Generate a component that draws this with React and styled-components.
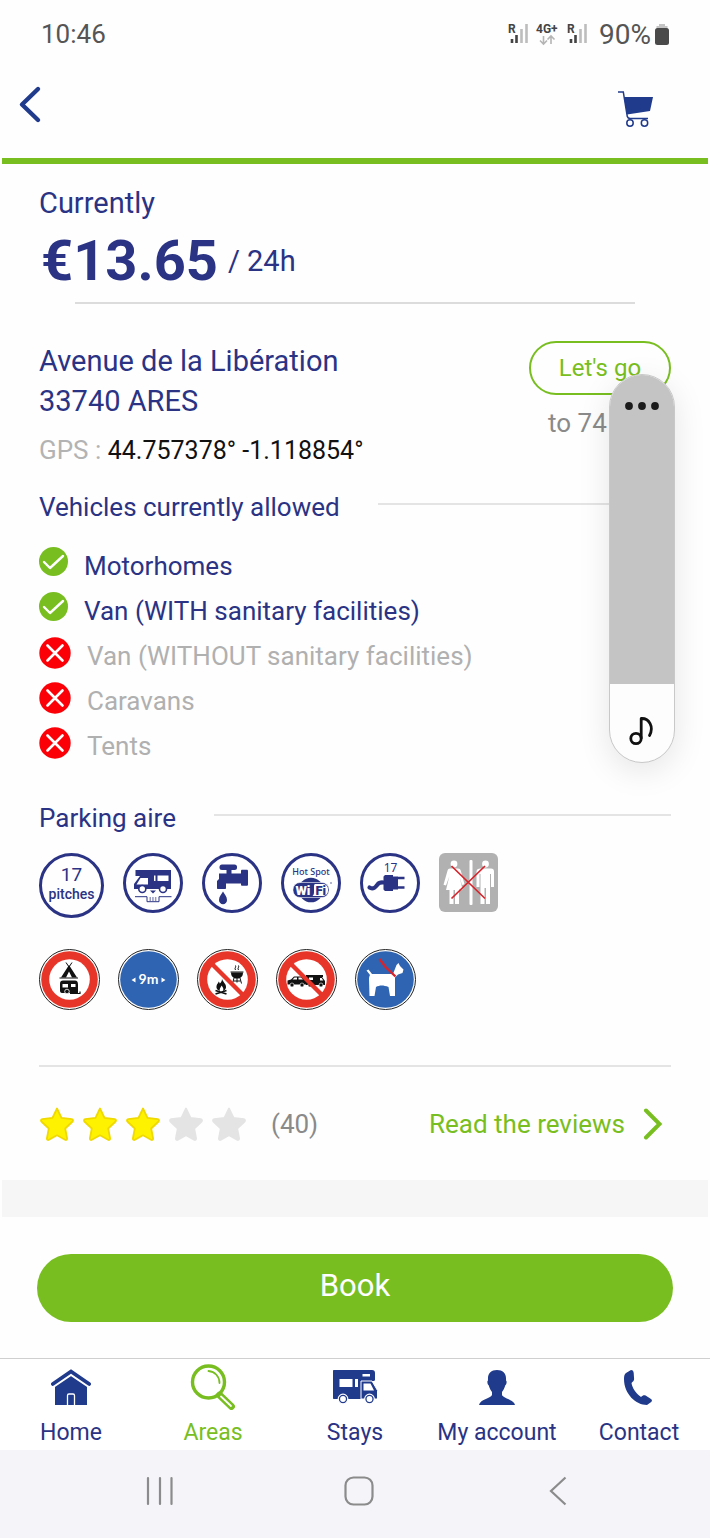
import { useState } from "react";
import styled, { createGlobalStyle } from "styled-components";

const navy = "#2a3384";
const blue = "#203a8c";
const green = "#78be20";

const vehicles = [
  { label: "Motorhomes", allowed: true },
  { label: "Van (WITH sanitary facilities)", allowed: true },
  { label: "Van (WITHOUT sanitary facilities)", allowed: false },
  { label: "Caravans", allowed: false },
  { label: "Tents", allowed: false },
];

const CheckIcon = () => (
  <svg width="29" height="29" viewBox="0 0 29 29">
    <circle cx="14.5" cy="14.5" r="14.5" fill={green} />
    <path d="M5 15l6 6L24 9" fill="none" stroke="#fff" strokeWidth="2.4" strokeLinecap="round" strokeLinejoin="round" />
  </svg>
);

const CrossIcon = () => (
  <svg width="32" height="32" viewBox="0 0 32 32">
    <circle cx="16" cy="16" r="15.7" fill="#fb0007" />
    <path d="M8.5 8.5l15 15M23.5 8.5l-15 15" stroke="#fff" strokeWidth="2.6" strokeLinecap="round" />
  </svg>
);

const SignalIcon = () => (
  <svg width="21" height="26" viewBox="0 0 21 26">
    <text x="0" y="12" fontFamily="Roboto, sans-serif" fontSize="12" fontWeight="700" fill="#444">R</text>
    <path d="M4 18v4M8.5 14v8" stroke="#444" strokeWidth="2.6" />
    <path d="M13.5 8v14M18.500 3v19" stroke="#bdbdbd" strokeWidth="2.6" />
  </svg>
);

const NetworkIcon = () => (
  <svg width="24" height="26" viewBox="0 0 24 26">
    <text x="0" y="12" fontFamily="Roboto, sans-serif" fontSize="12" fontWeight="700" fill="#444">4G+</text>
    <path d="M7.5 15v8M4 19.500l3.500 3.500 3.500-3.500M15 23v-8M11.500 18.500L15 15l3.500 3.500" fill="none" stroke="#b5b5b5" strokeWidth="1.6" />
  </svg>
);

const BatteryIcon = () => (
  <svg width="14" height="21" viewBox="0 0 14 21">
    <path d="M4 0h6v2h2.500v3h-11V2H4z" fill="#c4c4c4" />
    <rect x="0" y="4" width="14" height="17" rx="2.5" fill="#4a4a4a" />
  </svg>
);

const BackIcon = () => (
  <svg width="24" height="44" viewBox="0 0 24 44">
    <path d="M20 5L4 20.500 20 36" fill="none" stroke={blue} strokeWidth="4.4" strokeLinecap="round" strokeLinejoin="round" />
  </svg>
);

const CartIcon = () => (
  <svg width="36" height="44" viewBox="0 0 36 44">
    <path d="M6 13h29l-3 14-23 3.500z" fill={blue} />
    <path d="M0 8h5.300l4 24.500c.4 1.500 1.500 2 3 2H30" fill="none" stroke={blue} strokeWidth="1.5" />
    <circle cx="12" cy="39" r="3.2" fill="#fff" stroke={blue} strokeWidth="1.5" />
    <circle cx="26.5" cy="39" r="3.2" fill="#fff" stroke={blue} strokeWidth="1.5" />
  </svg>
);

const StarIcon = ({ filled }) => (
  <svg width="36" height="36" viewBox="0 0 36 36">
    <path
      d="M18 2.500l4.500 9.300 10.300 1.400c1.200.2 1.600 1.500.8 2.300l-7.400 7 1.900 9.900c.2 1.200-.9 2-2 1.400L18 29.300l-8.100 4.500c-1.100.6-2.200-.2-2-1.400l1.900-9.900-7.400-7c-.8-.8-.4-2.100.8-2.300l10.300-1.400z"
      fill={filled ? "#fff200" : "#e4e4e4"}
      stroke={filled ? "#efd900" : "#e4e4e4"}
      strokeWidth="1.8"
      strokeLinejoin="round"
    />
  </svg>
);

const ServiceIcon = () => (
  <svg width="60" height="60" viewBox="0 0 60 60">
    <circle cx="30" cy="30" r="28.5" fill="#fff" stroke={navy} strokeWidth="3" />
    <path d="M12.500 17H48v19H29V23H12.500z" fill={navy} />
    <path d="M17 23h12.500v13H11v-5z" fill={navy} />
    <path d="M17.500 25h7.500v6.500H13.500zM34.500 22.500h11V28h-11zM31 22.500h1.500V28H31z" fill="#fff" />
    <circle cx="19.3" cy="36" r="3.5" fill="#fff" stroke={navy} strokeWidth="1.6" />
    <circle cx="40" cy="36" r="3.5" fill="#fff" stroke={navy} strokeWidth="1.6" />
    <path d="M27 37.500h6l-3 3z" fill={navy} />
    <path d="M12 43.700h12v5h12v-5h12.500" fill="none" stroke={navy} strokeWidth="1" />
    <path d="M26.500 45h7M26.500 47h7" stroke={navy} strokeWidth="1" strokeDasharray="1.5 1.2" />
  </svg>
);

const WaterIcon = () => (
  <svg width="60" height="60" viewBox="0 0 60 60">
    <circle cx="30" cy="30" r="28.5" fill="#fff" stroke={navy} strokeWidth="3" />
    <rect x="17.5" y="11.5" width="17.5" height="5.5" rx="2.5" fill={navy} />
    <path d="M24.500 16h5v4.500H39V18c0-.8.500-1.300 1.300-1.300h4.400c.8 0 1.300.5 1.300 1.300v13.500c0 .8-.5 1.300-1.300 1.300h-4.400c-.8 0-1.300-.5-1.300-1.300v-1H24v4.500c0 .6-.4 1-1 1h-7c-.6 0-1-.4-1-1v-7l2-2v-5.500h7.500z" fill={navy} />
    <path d="M21 38.500c1.500 3 4 5 4 8.500a4 4.300 0 01-8 0c0-3.500 2.500-5.500 4-8.500z" fill={navy} />
  </svg>
);

const WifiIcon = () => (
  <svg width="60" height="60" viewBox="0 0 60 60">
    <circle cx="30" cy="30" r="28.5" fill="#fff" stroke={navy} strokeWidth="3" />
    <text x="30" y="22" textAnchor="middle" fontFamily="Noto Sans, sans-serif" fontSize="9" fontWeight="500" fill={navy}>Hot Spot</text>
    <circle cx="30" cy="37" r="12.3" fill={navy} />
    <rect x="12" y="29.5" width="36" height="15" rx="7" fill={navy} stroke="#fff" strokeWidth=".6" />
    <path d="M34 31h8a5 5 0 015 5v2a5 5 0 01-5 5H31.500c1-1 1.500-2 1.500-4v-5.500c0-1 .3-2.500 1-2.500z" fill="#fff" />
    <text x="14.5" y="41.500" fontFamily="Roboto, sans-serif" fontSize="13" fontWeight="900" fill="#fff">Wi</text>
    <text x="34.5" y="41.500" fontFamily="Roboto, sans-serif" fontSize="13" fontWeight="900" fill={navy}>Fi</text>
    <circle cx="50" cy="30" r=".7" fill={navy} />
  </svg>
);

const PowerIcon = () => (
  <svg width="60" height="60" viewBox="0 0 60 60">
    <circle cx="30" cy="30" r="28.5" fill="#fff" stroke={navy} strokeWidth="3" />
    <text x="30.5" y="18.500" textAnchor="middle" fontFamily="Noto Sans, sans-serif" fontSize="12" fill={navy}>17</text>
    <path d="M9.500 34.500c4 2.500 6-.5 8-3s3.500-2 6.500-2" fill="none" stroke={navy} strokeWidth="4.2" strokeLinecap="round" />
    <path d="M23.500 23.500l1.500-1.500h8v1.500h5v13h-5V38h-8l-1.500-1.500z" fill={navy} />
    <path d="M38 25h6.500M38 34.500h6.500" stroke={navy} strokeWidth="2.5" />
  </svg>
);

const ToiletIcon = () => (
  <svg width="59" height="59" viewBox="0 0 59 59">
    <rect width="59" height="59" rx="6" fill="#b1b1b1" />
    <g fill="#fff">
      <circle cx="15" cy="11" r="3.4" />
      <path d="M11 15.500h8c1.500 0 2.300.8 2.800 2.200l3.700 13.600-2.500.8-2.500-8.500 3 13H20V51h-4V37h-1.500v14h-4V37H7l3.300-13.500L7 32.500l-2.500-.8 4-14c.4-1.400 1.200-2.200 2.500-2.200z" />
      <rect x="30.5" y="7" width="3" height="45" rx="1" />
      <circle cx="46.5" cy="11" r="3.4" />
      <path d="M41.500 15.500h10.500c2 0 3 1.200 3 3V34h-3V21h-1v30h-4V35h-1.500v16h-4V21h-1v13h-3V18.500c0-1.800 1.500-3 4-3z" />
    </g>
    <path d="M12.500 13l33.500 32.500M46 13L12.500 45.500" stroke="#d8232a" strokeWidth="1.7" />
  </svg>
);

const RoadSign = ({ color, children }) => (
  <svg width="61" height="61" viewBox="0 0 61 61">
    <circle cx="30.5" cy="30.5" r="30" fill="#fff" stroke="#222" strokeWidth="1" />
    <circle cx="30.5" cy="30.5" r="28.3" fill={color} />
    {children}
  </svg>
);

const NoCampingSign = () => (
  <RoadSign color="#e73529">
    <circle cx="30.5" cy="30.5" r="20.3" fill="#fff" />
    <path d="M27 13.500l3 4.500 3-4.500M20.500 29h18.500" fill="none" stroke="#111" strokeWidth="1" />
    <path d="M30 16l8 12.500h-5L30 22.500l-3 6h-5z" fill="#111" />
    <path d="M24 31.500h12c2 0 3 1.500 3 4V44H23c-1.500 0-2-1-2-2.500v-7c0-2 1-3 3-3z" fill="#111" />
    <path d="M23.500 35H29v3.500h-5.500zM32 35h4.500v3H32z" fill="#fff" />
    <circle cx="28" cy="42.5" r="2.3" fill="#111" stroke="#fff" strokeWidth=".8" />
    <path d="M31 44.500h10v-2" fill="none" stroke="#111" strokeWidth="1.2" />
  </RoadSign>
);

const LengthSign = () => (
  <RoadSign color="#2e64b1">
    <text x="30.5" y="35" textAnchor="middle" fontFamily="Lato, sans-serif" fontSize="14" fontWeight="700" fill="#fff">9m</text>
    <path d="M17.500 28.500v5L13.500 31zM43.500 28.500v5l4-2.500z" fill="#fff" />
  </RoadSign>
);

const NoFireSign = () => (
  <RoadSign color="#e73529">
    <circle cx="30.5" cy="30.5" r="20.3" fill="#fff" />
    <path d="M25 29.500c0 3 4.500 5 4 9-.3 2-1.500 3-3 3.500.8-2 .3-3.500-1.500-5.500-.5 2-2.500 3-1.500 5.500-2.500-.5-4-2.500-3.500-5s2-2.500 2-4.500c.7.500 1 1 1.200 2 1.300-1 2.500-2.500 2.300-5z" fill="#111" />
    <path d="M18.500 41.500l11 3.500M29.500 41.500l-11 3.500" stroke="#111" strokeWidth="1.8" />
    <path d="M34 23.500h12c0 4-2.500 6-6 6s-6-2-6-6z" fill="#111" />
    <path d="M33.500 23h13M37 29l-1.500 5.500M43 29l1.500 5.500M40 29v4.500M36.500 32h7M38.500 21c-1.500-2 1-2.500 0-4.500M41.500 21c-1.500-2 1-2.500 0-4.500" fill="none" stroke="#111" strokeWidth="1" />
    <path d="M14.500 14.500l32 32" stroke="#e73529" strokeWidth="4.5" />
  </RoadSign>
);

const NoOvernightSign = () => (
  <RoadSign color="#e73529">
    <circle cx="30.5" cy="30.5" r="20.3" fill="#fff" />
    <path d="M11.500 31.500l3.500-1 3-3h7.500l3.500 3.500h2v4.500H11.500z" fill="#111" />
    <path d="M16.500 30.500l2-2h2.500v2zM22.500 28.500h2.500l2 2h-4.500z" fill="#fff" />
    <path d="M30 26h17v2h-1l3 4v4H30z" fill="#111" />
    <path d="M33 28.500h4V31h-4zM44 29h1.700l1.600 2.500H44z" fill="#fff" />
    <g fill="#111" stroke="#fff" strokeWidth=".6">
      <circle cx="16" cy="36" r="2" />
      <circle cx="26" cy="36" r="2" />
      <circle cx="34" cy="36" r="2" />
      <circle cx="45" cy="36" r="2" />
    </g>
    <path d="M14.500 14.500l32 32" stroke="#e73529" strokeWidth="4.5" />
  </RoadSign>
);

const DogSign = () => (
  <RoadSign color="#2e64b1">
    <path d="M11.500 21.500l2-1 3.500 4.500h21l3.500-9 2-2 1.500 3 3.500 3.500-1 3.500-4.500 1.500-3 3v18.500h-5L33.500 38c-5-2-9-2-12.500 0l-1.500 9h-5l-.5-17c0-2 .5-3 1-4z" fill="#fff" />
    <path d="M24.500 10l6 8 10 9.500" fill="none" stroke="#d8232a" strokeWidth="2.4" />
  </RoadSign>
);

const HomeIcon = () => (
  <svg width="40" height="46" viewBox="0 0 40 46">
    <path d="M4 20.500L20 9l16 11.500V41H4z" fill={blue} />
    <path d="M1.500 21L20 8.500 38.500 21" fill="none" stroke="#fff" strokeWidth="6" />
    <path d="M1.800 20L20 7.500 38.200 20" fill="none" stroke={blue} strokeWidth="3.6" strokeLinecap="round" />
    <path d="M16.500 41V31.500a1.500 1.500 0 011.500-1.500h4a1.500 1.500 0 011.500 1.500V41" fill={blue} stroke="#fff" strokeWidth="1.3" />
  </svg>
);

const SearchIcon = () => (
  <svg width="46" height="46" viewBox="0 0 46 46">
    <circle cx="18.5" cy="18" r="16" fill="none" stroke={green} strokeWidth="3.4" />
    <path d="M18.500 7c6.500.5 11 5.500 11 12" fill="none" stroke={green} strokeWidth="1.8" strokeLinecap="round" />
    <path d="M29.500 31l12 11.500" stroke={green} strokeWidth="6.8" strokeLinecap="round" />
    <path d="M31 32.500l10 9.500" stroke="#fff" strokeWidth="1.8" strokeLinecap="round" />
  </svg>
);

const CamperIcon = () => (
  <svg width="45" height="46" viewBox="0 0 45 46">
    <path d="M1 6h38c2 0 3 1 3 3v6.500c0 .8-.5 1.500-1.500 1.500H30v18H1c-.6 0-1-.4-1-1V7c0-.6.4-1 1-1z" fill={blue} />
    <path d="M6.500 15h13v8h-13zM22 15h3v8h-3zM29.500 10h7.500v2.500h-7.500z" fill="#fff" />
    <path d="M28 17h11l5.500 9.500V35H28z" fill={blue} stroke="#fff" strokeWidth="1" />
    <path d="M30.500 19.500h7L41 26.500H30.500z" fill="#fff" />
    <circle cx="10" cy="35" r="4.8" fill={blue} stroke="#fff" strokeWidth="1.2" />
    <circle cx="10" cy="35" r="2.9" fill="#fff" />
    <circle cx="36.5" cy="35" r="4.8" fill={blue} stroke="#fff" strokeWidth="1.2" />
    <circle cx="36.5" cy="35" r="2.9" fill="#fff" />
  </svg>
);

const AccountIcon = () => (
  <svg width="36" height="46" viewBox="0 0 36 46">
    <path d="M18 6c6 0 9.500 3 9 10.500 1 .3.800 3.800-.8 5C25.700 24 24 26.500 23 28v3c1.500 3.500 12 4.500 13 10H0c1-5.500 11.500-6.500 13-10v-3c-1-1.500-2.700-4-3.200-6.500-1.600-1.200-1.800-4.700-.8-5C8.500 9 12 6 18 6z" fill={blue} />
  </svg>
);

const PhoneIcon = () => (
  <svg width="42" height="46" viewBox="0 0 42 46">
    <path transform="translate(6 6)" d="M2 3l5-3C8.800 0 9.500 1 9.700 3l.4 6c0 2-1.300 2.500-2.600 4 .8 5 4.300 10.500 9.500 14 1.800-1.500 3-2.200 5-1.200l5 3.200c1.300 1 1.200 2 .2 3L23 35C12 35 0 24 0 9c0-3 .5-5 2-6z" fill={blue} />
  </svg>
);

const MusicIcon = () => (
  <svg width="26" height="30" viewBox="0 0 26 30" fill="none" stroke="#111" strokeWidth="2.8" strokeLinecap="round" strokeLinejoin="round">
    <circle cx="7" cy="22.5" r="5.2" />
    <path d="M12.200 22V2.500c8-.5 13 8.500 8.300 17" />
  </svg>
);

const tabs = [
  { label: "Home", Icon: HomeIcon },
  { label: "Areas", Icon: SearchIcon },
  { label: "Stays", Icon: CamperIcon },
  { label: "My account", Icon: AccountIcon },
  { label: "Contact", Icon: PhoneIcon },
];

const VolumePanel = () => {
  const [volume, setVolume] = useState(100);

  return (
    <Volume>
      <MoreButton aria-label="More volume options">
        <svg width="34" height="8" viewBox="0 0 34 8" fill="#1b1b1b">
          <circle cx="4" cy="4" r="3.9" />
          <circle cx="17" cy="4" r="3.9" />
          <circle cx="30" cy="4" r="3.9" />
        </svg>
      </MoreButton>
      <VolumeSlider
        type="range"
        aria-label="Media volume"
        value={volume}
        onChange={(e) => setVolume(e.target.value)}
      />
      <MuteButton aria-label="Mute">
        <MusicIcon />
      </MuteButton>
    </Volume>
  );
};

const App = () => {
  const [activeTab, setActiveTab] = useState("Areas");

  return (
    <Page>
      <GlobalStyle />
      <StatusBar>
        <span>10:46</span>
        <StatusIcons>
          <SignalIcon />
          <NetworkIcon />
          <SignalIcon />
          <Battery>
            90%
            <BatteryIcon />
          </Battery>
        </StatusIcons>
      </StatusBar>

      <Header>
        <IconButton aria-label="Back">
          <BackIcon />
        </IconButton>
        <IconButton aria-label="Cart">
          <CartIcon />
        </IconButton>
      </Header>

      <Content>
        <PriceBlock>
          <Lead>Currently</Lead>
          <Price>
            <strong>€13.65</strong>
            <span>/ 24h</span>
          </Price>
        </PriceBlock>

        <Location>
          <div>
            <Lead>
              Avenue de la Libération
              <br />
              33740 ARES
            </Lead>
            <Gps>
              GPS : <span>44.757378° -1.118854°</span>
            </Gps>
          </div>
          <Directions>
            <GoButton>Let's go</GoButton>
            <Distance>to 74</Distance>
          </Directions>
        </Location>

        <SectionTitle>Vehicles currently allowed</SectionTitle>
        <VehicleList>
          {vehicles.map(({ label, allowed }) => (
            <Vehicle key={label} $allowed={allowed}>
              {allowed ? <CheckIcon /> : <CrossIcon />}
              <span>{label}</span>
            </Vehicle>
          ))}
        </VehicleList>

        <SectionTitle>Parking aire</SectionTitle>
        <Services>
          <Pitches>
            <span>17</span>
            pitches
          </Pitches>
          <ServiceIcon />
          <WaterIcon />
          <WifiIcon />
          <PowerIcon />
          <ToiletIcon />
        </Services>
        <Signs>
          <NoCampingSign />
          <LengthSign />
          <NoFireSign />
          <NoOvernightSign />
          <DogSign />
        </Signs>

        <Reviews>
          <Stars>
            {[1, 2, 3, 4, 5].map((n) => (
              <StarIcon key={n} filled={n <= 3} />
            ))}
          </Stars>
          <ReviewCount>(40)</ReviewCount>
          <ReviewsLink href="#reviews">
            Read the reviews
            <svg width="20" height="32" viewBox="0 0 20 32">
              <path d="M3 2.500L16.500 16 3 29.500" fill="none" stroke={green} strokeWidth="4" strokeLinecap="round" />
            </svg>
          </ReviewsLink>
        </Reviews>
      </Content>

      <Separator />
      <BookBar>
        <BookButton>Book</BookButton>
      </BookBar>

      <TabBar>
        {tabs.map(({ label, Icon }) => (
          <Tab key={label} $active={label === activeTab} onClick={() => setActiveTab(label)}>
            <Icon />
            {label}
          </Tab>
        ))}
      </TabBar>

      <SystemNav>
        <IconButton aria-label="Recent apps">
          <svg width="28" height="30" viewBox="0 0 28 30">
            <path d="M2 2v26M14 2v26M25.500 2v26" stroke="#8b8b8b" strokeWidth="2.2" strokeLinecap="round" />
          </svg>
        </IconButton>
        <IconButton aria-label="Home screen">
          <svg width="30" height="30" viewBox="0 0 30 30">
            <rect x="1.5" y="1.5" width="27" height="27" rx="8" fill="none" stroke="#8b8b8b" strokeWidth="2.2" />
          </svg>
        </IconButton>
        <IconButton aria-label="System back">
          <svg width="18" height="30" viewBox="0 0 18 30">
            <path d="M16.500 1.500L2 15l14.500 13.500" fill="none" stroke="#8b8b8b" strokeWidth="2.2" />
          </svg>
        </IconButton>
      </SystemNav>

      <VolumePanel />
    </Page>
  );
};

const GlobalStyle = createGlobalStyle`
  *, *::before, *::after {
    box-sizing: border-box;
  }

  body {
    margin: 0;
    background: #fefefe;
    color: ${navy};
    font-family: Roboto, sans-serif;
  }

  button {
    padding: 0;
    border: 0;
    background: none;
    font: inherit;
    color: inherit;
    cursor: pointer;
  }

  svg {
    display: block;
    flex-shrink: 0;
  }

  p, h2, ul {
    margin: 0;
    padding: 0;
  }
`;

const Page = styled.div`
  position: relative;
`;

const StatusBar = styled.div`
  display: flex;
  align-items: center;
  justify-content: space-between;
  height: 68px;
  padding: 0 41px;
  font-size: 26px;
  color: #555;
`;

const StatusIcons = styled.div`
  display: flex;
  align-items: center;
  gap: 7px;
`;

const Battery = styled.div`
  display: flex;
  align-items: center;
  gap: 4px;
  margin-left: 4px;
  font-size: 28px;
`;

const Header = styled.header`
  display: flex;
  align-items: center;
  justify-content: space-between;
  height: 96px;
  margin: 0 2px;
  padding: 0 54px 14px 16px;
  border-bottom: 6px solid ${green};
`;

const IconButton = styled.button`
  display: flex;
  align-items: center;
  justify-content: center;
`;

const Content = styled.main`
  padding: 19px 39px 0;
`;

const PriceBlock = styled.section`
  &::after {
    content: "";
    display: block;
    margin: 4px 36px 0;
    border-top: 2px solid #dcdcdc;
  }
`;

const Lead = styled.p`
  font-size: 29px;
  line-height: 40px;
`;

const Price = styled.p`
  display: flex;
  align-items: center;
  gap: 10px;
  padding: 2px 0 0 2px;
  font-size: 29px;
  line-height: 73px;

  strong {
    font-size: 56px;
  }
`;

const Location = styled.section`
  display: flex;
  justify-content: space-between;
  padding-top: 37px;
`;

const Gps = styled.p`
  margin-top: 9px;
  font-size: 26px;
  line-height: 40px;
  color: #b3b3b3;

  span {
    font-size: 25px;
    color: #111;
  }
`;

const Directions = styled.div`
  width: 142px;
`;

const GoButton = styled.button`
  width: 100%;
  height: 54px;
  border: 2px solid ${green};
  border-radius: 27px;
  font-size: 24px;
  color: ${green};
`;

const Distance = styled.p`
  padding: 8px 0 0 19px;
  font-size: 26px;
  line-height: 40px;
  color: #8a8a8a;
`;

const SectionTitle = styled.h2`
  display: flex;
  align-items: center;
  gap: 38px;
  margin-top: 16px;
  font-size: 26px;
  font-weight: 400;
  line-height: 40px;

  &::after {
    content: "";
    flex: 1;
    margin-bottom: 6px;
    border-top: 2px solid #e4e4e4;
  }
`;

const VehicleList = styled.ul`
  display: flex;
  flex-direction: column;
  gap: 7px;
  margin: 20px 0 33px;
  list-style: none;
`;

const Vehicle = styled.li`
  display: flex;
  align-items: flex-start;
  gap: 16px;
  height: 38px;
  font-size: 26px;
  line-height: 38px;
  color: ${({ $allowed }) => ($allowed ? navy : "#b0b0b0")};
`;

const Services = styled.div`
  display: flex;
  flex-wrap: wrap;
  gap: 19px;
  margin-top: 15px;
`;

const Pitches = styled.div`
  display: flex;
  flex-direction: column;
  align-items: center;
  justify-content: center;
  width: 65px;
  height: 65px;
  padding-bottom: 6px;
  border: 3px solid ${navy};
  border-radius: 50%;
  font-size: 14px;
  font-weight: 500;
  line-height: 16px;

  span {
    font-size: 19px;
    font-weight: 400;
    line-height: 22px;
  }
`;

const Signs = styled.div`
  display: flex;
  flex-wrap: wrap;
  gap: 18px;
  margin-top: 31px;
`;

const Reviews = styled.section`
  display: flex;
  align-items: center;
  height: 115px;
  margin-top: 55px;
  border-top: 2px solid #e4e4e4;
  font-size: 26px;
`;

const Stars = styled.div`
  display: flex;
  gap: 7px;
`;

const ReviewCount = styled.span`
  margin-left: 24px;
  color: #8a8a8a;
`;

const ReviewsLink = styled.a`
  display: flex;
  align-items: center;
  gap: 18px;
  margin-left: auto;
  padding-right: 8px;
  color: ${green};
  text-decoration: none;
`;

const Separator = styled.div`
  height: 37px;
  margin: 0 2px;
  background: #f6f6f6;
`;

const BookBar = styled.div`
  padding: 37px 37px 36px;
`;

const BookButton = styled.button`
  width: 100%;
  height: 68px;
  padding-bottom: 5px;
  border-radius: 34px;
  background: ${green};
  font-size: 31px;
  color: #fff;
`;

const TabBar = styled.nav`
  display: grid;
  grid-template-columns: repeat(5, 1fr);
  border-top: 1px solid #cfcfcf;
  background: #fff;
`;

const Tab = styled.button`
  display: flex;
  flex-direction: column;
  align-items: center;
  gap: 9px;
  padding: 5px 0 3px;
  font-size: 23px;
  line-height: 28px;
  color: ${({ $active }) => ($active ? green : navy)};
`;

const SystemNav = styled.nav`
  display: grid;
  grid-template-columns: repeat(3, 1fr);
  height: 88px;
  padding: 0 52px 6px 60px;
  background: #f4f4f9;
`;

/* floats over the page, like the system volume overlay */
const Volume = styled.div`
  position: absolute;
  top: 374px;
  right: 35px;
  display: flex;
  flex-direction: column;
  width: 66px;
  height: 389px;
  overflow: hidden;
  border: 1px solid #c8c8c8;
  border-radius: 33px;
  background: #fdfdfd;
  box-shadow: 0 8px 32px rgba(0, 0, 0, 0.1);
`;

const MoreButton = styled.button`
  display: flex;
  align-items: center;
  justify-content: center;
  height: 62px;
  background: #c4c4c4;
`;

const VolumeSlider = styled.input`
  flex: 1;
  width: 100%;
  min-height: 0;
  margin: 0;
  appearance: none;
  writing-mode: vertical-lr;
  direction: rtl;
  background: #c4c4c4;

  &::-webkit-slider-thumb {
    appearance: none;
    width: 64px;
    height: 1px;
    background: transparent;
  }
`;

const MuteButton = styled.button`
  display: flex;
  align-items: center;
  justify-content: center;
  height: 78px;
  padding-top: 16px;
`;

export default App;
